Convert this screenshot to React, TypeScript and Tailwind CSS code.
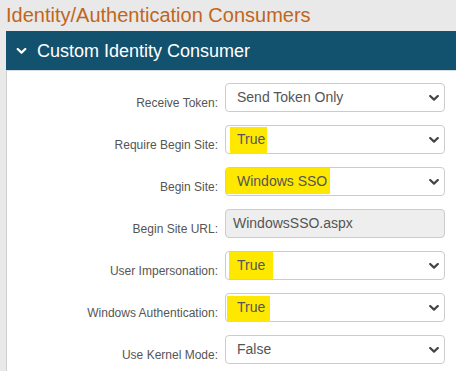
import React from 'react';

type Field = {
	label: string;
	value: string;
	kind: 'select' | 'input';
	// hand-drawn highlight box, relative to the control
	mark?: { left: number; top: number; width: number; height: number };
};

const FIELDS: Field[] = [
	{ label: 'Receive Token:', value: 'Send Token Only', kind: 'select' },
	{ label: 'Require Begin Site:', value: 'True', kind: 'select', mark: { left: 5, top: 2, width: 37, height: 27 } },
	{ label: 'Begin Site:', value: 'Windows SSO', kind: 'select', mark: { left: 1, top: 1, width: 104, height: 26 } },
	{ label: 'Begin Site URL:', value: 'WindowsSSO.aspx', kind: 'input' },
	{ label: 'User Impersonation:', value: 'True', kind: 'select', mark: { left: 4, top: 1, width: 44, height: 27 } },
	{ label: 'Windows Authentication:', value: 'True', kind: 'select', mark: { left: 2, top: 3, width: 43, height: 26 } },
	{ label: 'Use Kernel Mode:', value: 'False', kind: 'select' },
];

function ChevronDown({ className }: { className?: string }) {
	return (
		<svg viewBox="0 0 10 6" className={className} fill="none">
			<polyline points="1.2,1 5,4.6 8.8,1" stroke="currentColor" strokeWidth="2.2" strokeLinecap="round" strokeLinejoin="round" />
		</svg>
	);
}

function Control({ field }: { field: Field }) {
	if (field.kind === 'input') {
		return (
			<div className="h-[29px] w-[220px] rounded-[4px] border border-[#cccccc] bg-[#eeeeee] flex items-center pl-[7px] text-[14px] text-[#555555]">
				{field.value}
			</div>
		);
	}
	return (
		<div className="relative h-[29px] w-[220px] rounded-[4px] border border-[#cccccc] bg-white flex items-center pl-[11px] text-[14px] text-[#555555]">
			{field.mark && (
				<span
					className="absolute bg-[#ffe800]"
					style={{ left: field.mark.left - 1, top: field.mark.top - 1, width: field.mark.width, height: field.mark.height }}
				/>
			)}
			<span className="relative">{field.value}</span>
			<ChevronDown className="absolute right-[5px] top-[11px] w-[10px] h-[6px] text-[#444444]" />
		</div>
	);
}

export default function App() {
	return (
		<div className="w-[456px] h-[371px] overflow-hidden bg-[#e9e9e9]" style={{ fontFamily: '"Liberation Sans", Arial, sans-serif' }}>
			{/* Page title */}
			<div className="h-[31px] pl-[6px] pt-[4px] text-[20px] leading-[22px] text-[#c0661c]">
				Identity/Authentication Consumers
			</div>

			{/* Panel */}
			<div className="ml-[6px] w-[470px]">
				<div className="h-[40px] bg-[#13526e] border-b border-[#d3dbe0] flex items-center text-white">
					<ChevronDown className="ml-[10px] w-[11px] h-[6px]" />
					<span className="ml-[10px] text-[18px] leading-[20px]">Custom Identity Consumer</span>
				</div>
				<div className="bg-white border-l border-[#cfcfcf] pt-[12px] flex flex-col gap-[13px] h-[300px]">
					{FIELDS.map((f) => (
						<div key={f.label} className="flex items-start">
							<label className="w-[211px] text-right pt-[13px] text-[12px] leading-[14px] text-[#555555]">
								{f.label}
							</label>
							<div className="ml-[7px]">
								<Control field={f} />
							</div>
						</div>
					))}
				</div>
			</div>
		</div>
	);
}
